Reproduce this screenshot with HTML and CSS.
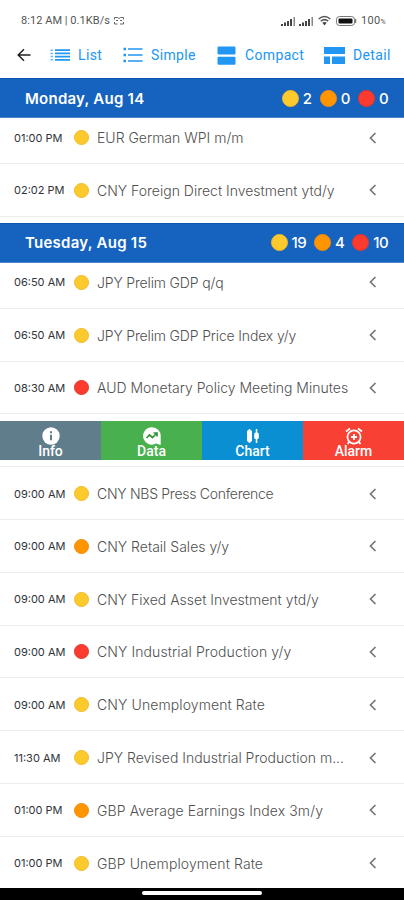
FILE: index.html
```html
<!DOCTYPE html>
<html lang="en">
<head>
    <meta charset="UTF-8">
    <meta name="viewport" content="width=device-width, initial-scale=1.0">
    <title>Economic Calendar</title>
    <link rel="stylesheet" href="styles.css">
</head>
<body>
  <svg width="0" height="0" class="defs">
    <symbol id="chevron" viewBox="0 0 8 12"><path d="M6.500 1L1.500 6l5 5" fill="none" stroke="currentColor" stroke-width="1.700"/></symbol>
    <symbol id="signal" viewBox="0 0 15 10"><path d="M0 8h2v2H0zM3 6.500h2V10H3zM6 5h2v5H6zM9 3h2v7H9z" fill="#444"/><path d="M12.500 1h1.500v9h-1.500z" fill="#888"/></symbol>
  </svg>
  <div class="screen">
    <div class="status">
      <span class="status-text">8:12 AM | 0.1KB/s</span>
      <svg class="mail" width="10" height="8" viewBox="0 0 10 8"><path d="M.5 2.500v-2h3l1.500 1 1.500-1h3v2M.5 5v2h3M6 7h3.500V5M2 3.500h2M6 3.500h2" fill="none" stroke="#666"/></svg>
      <svg class="signal" width="15" height="10"><use href="#signal"/></svg>
      <svg class="signal" width="15" height="10"><use href="#signal"/></svg>
      <svg class="wifi" width="13" height="11" viewBox="0 0 13 11"><path d="M.7 4Q6.500-1 12.300 4M2.800 6.200q3.700-3 7.400 0" fill="none" stroke="#555" stroke-width="1.600"/><path d="M4.300 7.800q2.200-1.600 4.400 0L6.500 10.500z" fill="#444"/></svg>
      <svg class="battery" width="21" height="10" viewBox="0 0 21 10"><rect x=".5" y=".5" width="18" height="9" rx="3" fill="none" stroke="#777"/><rect x="2.500" y="2.500" width="14" height="5" rx="1" fill="#111"/><path d="M19.500 3v4" stroke="#777" stroke-width="1.500"/></svg>
      <span class="percent">100<small>%</small></span>
    </div>

    <div class="tabs">
      <svg class="back" width="14" height="14" viewBox="0 0 14 14"><path d="M13.500 7H1.500M7 1.200L1.200 7 7 12.800" fill="none" stroke="#222" stroke-width="1.500"/></svg>
      <div class="tab tab-list">
        <svg width="20" height="12" viewBox="0 0 20 12"><path d="M5 1.200h15M5 4.400h15M5 7.600h15M5 10.800h15" stroke="#2196f3" stroke-width="1.700"/><path d="M.5 1.200h2.500M.5 4.400h2.500M.5 7.600h2.500M.5 10.800h2.500" stroke="#6bb8f6" stroke-width="1.500"/></svg>
        <span>List</span>
      </div>
      <div class="tab tab-simple">
        <svg width="20" height="16" viewBox="0 0 20 16"><path d="M5 2h14.500M5 8h14.500M5 14h14.500" stroke="#2196f3" stroke-width="1.700"/><path d="M.5 2h2.500M.5 8h2.500M.5 14h2.500" stroke="#2196f3" stroke-width="2.300"/></svg>
        <span>Simple</span>
      </div>
      <div class="tab tab-compact">
        <svg width="19" height="19" viewBox="0 0 19 19"><rect x=".5" y=".5" width="18" height="8" rx="1.200" fill="#2196f3"/><rect x=".5" y="10.700" width="18" height="8" rx="1.200" fill="#2196f3"/></svg>
        <span>Compact</span>
      </div>
      <div class="tab tab-detail">
        <svg width="21" height="17" viewBox="0 0 21 17"><path d="M0 0h21v7H0zM0 9.500h6V17H0zM8 9.500h13V17H8z" fill="#2196f3"/></svg>
        <span>Detail</span>
      </div>
    </div>

    <div class="day">
      <h2>Monday, Aug 14</h2>
      <div class="counts">
        <i class="dot yellow"></i><span>2</span>
        <i class="dot orange"></i><span>0</span>
        <i class="dot red"></i><span>0</span>
      </div>
    </div>
    <div class="event first"><time>01:00 PM</time><i class="dot yellow"></i><p>EUR German WPI m/m</p><svg class="chevron"><use href="#chevron"/></svg></div>
    <div class="event"><time>02:02 PM</time><i class="dot yellow"></i><p>CNY Foreign Direct Investment ytd/y</p><svg class="chevron"><use href="#chevron"/></svg></div>

    <div class="day next-day">
      <h2>Tuesday, Aug 15</h2>
      <div class="counts">
        <i class="dot yellow"></i><span>19</span>
        <i class="dot orange"></i><span>4</span>
        <i class="dot red"></i><span>10</span>
      </div>
    </div>
    <div class="event first"><time>06:50 AM</time><i class="dot yellow"></i><p class="tight">JPY Prelim GDP q/q</p><svg class="chevron"><use href="#chevron"/></svg></div>
    <div class="event"><time>06:50 AM</time><i class="dot yellow"></i><p class="tight">JPY Prelim GDP Price Index y/y</p><svg class="chevron"><use href="#chevron"/></svg></div>
    <div class="event"><time>08:30 AM</time><i class="dot red"></i><p>AUD Monetary Policy Meeting Minutes</p><svg class="chevron"><use href="#chevron"/></svg></div>

    <div class="actions">
      <div class="action info">
        <svg width="18" height="18" viewBox="0 0 18 18"><circle cx="9" cy="9" r="8.700" fill="#fff"/><path d="M9 4.300v2M9 7.700v5.600" stroke="#607d8b" stroke-width="2"/></svg>
        <span>Info</span>
      </div>
      <div class="action data">
        <svg width="18" height="18" viewBox="0 0 18 18"><path d="M9 .3a8.700 8.700 0 1 0 4 16.300L17.700 18V9A8.700 8.700 0 0 0 9 .3z" fill="#fff"/><path d="M3.500 11l3-3 3 2.500 4-4M10.500 6H14v3.500" fill="none" stroke="#35923b" stroke-width="1.700"/></svg>
        <span>Data</span>
      </div>
      <div class="action chart">
        <svg width="18" height="18" viewBox="0 0 18 18"><rect x="3" y="3" width="5" height="12" rx="1.700" fill="#fff"/><path d="M5.500 2v14M12.500 2v14" stroke="#fff" stroke-width="1.500"/><rect x="10.200" y="5.500" width="4.600" height="6.500" rx="1.500" fill="#fff"/></svg>
        <span>Chart</span>
      </div>
      <div class="action alarm">
        <svg width="18" height="18" viewBox="0 0 18 18"><circle cx="9" cy="10" r="6.600" fill="none" stroke="#fff" stroke-width="1.700"/><path d="M1 4.500l4-3M17 4.500l-4-3M9 7v6M6 10h6M4.500 14.500l-2 2.500M13.500 14.500l2 2.500" stroke="#fff" stroke-width="1.800"/></svg>
        <span>Alarm</span>
      </div>
    </div>

    <div class="event"><time>09:00 AM</time><i class="dot yellow"></i><p class="tighter">CNY NBS Press Conference</p><svg class="chevron"><use href="#chevron"/></svg></div>
    <div class="event"><time>09:00 AM</time><i class="dot orange"></i><p>CNY Retail Sales y/y</p><svg class="chevron"><use href="#chevron"/></svg></div>
    <div class="event"><time>09:00 AM</time><i class="dot yellow"></i><p>CNY Fixed Asset Investment ytd/y</p><svg class="chevron"><use href="#chevron"/></svg></div>
    <div class="event"><time>09:00 AM</time><i class="dot red"></i><p class="wide">CNY Industrial Production y/y</p><svg class="chevron"><use href="#chevron"/></svg></div>
    <div class="event"><time>09:00 AM</time><i class="dot yellow"></i><p class="wide">CNY Unemployment Rate</p><svg class="chevron"><use href="#chevron"/></svg></div>
    <div class="event"><time>11:30 AM</time><i class="dot yellow"></i><p>JPY Revised Industrial Production m...</p><svg class="chevron"><use href="#chevron"/></svg></div>
    <div class="event"><time>01:00 PM</time><i class="dot orange"></i><p class="wide">GBP Average Earnings Index 3m/y</p><svg class="chevron"><use href="#chevron"/></svg></div>
    <div class="event last"><time>01:00 PM</time><i class="dot yellow"></i><p class="wide">GBP Unemployment Rate</p><svg class="chevron"><use href="#chevron"/></svg></div>

    <div class="gesture-bar"><span></span></div>
  </div>
</body>
</html>
```
FILE: styles.css
```css
* {
    box-sizing: border-box;
}

body {
    margin: 0;
    background-color: #ffffff;
    font-family: Inter, "Liberation Sans", sans-serif;
}

.defs {
    position: absolute;
}

.screen {
    width: 404px;
    height: 900px;
    display: flex;
    flex-direction: column;
    overflow: hidden;
}

.screen > div {
    flex-shrink: 0;
}

.status {
    height: 34px;
    padding: 7px 20px 0 21px;
    display: flex;
    align-items: center;
    font-family: Roboto, sans-serif;
    font-size: 11px;
    color: #555555;
    white-space: nowrap;
}

.status-text {
    width: 93px;
    letter-spacing: 0.05px;
}

.mail {
    margin-right: auto;
}

.signal {
    margin-right: 3px;
}

.wifi {
    margin: 0 5px 0 1px;
}

.battery {
    margin-right: 4px;
}

.percent {
    width: 23px;
    letter-spacing: 0.3px;
}

.percent small {
    font-size: 7px;
}

.tabs {
    height: 44px;
    padding: 0 0 2px 17px;
    display: flex;
    align-items: center;
    font-family: Roboto, sans-serif;
    font-size: 14px;
    font-weight: 400;
    color: #2196f3;
}

.tab {
    display: flex;
    align-items: center;
    letter-spacing: 0.35px;
}

.tab-list {
    width: 73px;
    margin-left: 19px;
    gap: 8px;
}

.tab-simple {
    width: 94px;
    gap: 8px;
}

.tab-compact {
    width: 107px;
    gap: 9px;
}

.tab-detail {
    gap: 8px;
}

.day {
    height: 40px;
    padding: 0 16px 0 25px;
    display: flex;
    align-items: center;
    justify-content: space-between;
    background-color: #1663bf;
    border-top: 1px solid #0c54ae;
    border-bottom: 1px solid #4c87cc;
    color: #ffffff;
}

.next-day {
    margin-top: 6px;
}

.day h2 {
    margin: 0;
    font-size: 15px;
    font-weight: 600;
    letter-spacing: 0.25px;
}

.counts {
    display: flex;
    align-items: center;
    font-size: 15px;
    font-weight: 500;
    letter-spacing: -0.6px;
}

.counts span {
    min-width: 9px;
    margin-left: 4px;
}

.counts span + .dot {
    margin-left: 8px;
}

.dot {
    width: 15px;
    height: 15px;
    border-radius: 50%;
    flex-shrink: 0;
}

.day .dot {
    width: 17px;
    height: 17px;
}

.yellow {
    background-color: #fdca2e;
    border: 1px solid #f3b926;
}

.orange {
    background-color: #ff9500;
    border: 1px solid #f58c0a;
}

.red {
    background-color: #fb3b2f;
    border: 1px solid #ea3428;
}

.event {
    height: 52.8px;
    padding: 1px 26px 0 14px;
    display: flex;
    align-items: center;
    border-bottom: 1px solid #ececec;
    background-color: #ffffff;
}

.event.first {
    height: 46px;
    padding-top: 0;
    padding-bottom: 6px;
}

.event.last {
    height: 51.2px;
    padding-top: 2px;
    border-bottom: none;
}

.event time {
    width: 60px;
    font-size: 11px;
    font-weight: 400;
    color: #30343a;
    white-space: nowrap;
}

.event p {
    flex: 1;
    margin: 0 0 0 8px;
    font-size: 14px;
    font-weight: 300;
    color: #505050;
    white-space: nowrap;
}

.event .tight {
    letter-spacing: -0.16px;
}

.event .tighter {
    letter-spacing: -0.28px;
}

.event .wide {
    letter-spacing: 0.1px;
}

.chevron {
    width: 8px;
    height: 12px;
    color: #777777;
    margin-right: 1px;
}

.actions {
    height: 52.8px;
    padding: 7px 0 6px;
    display: flex;
    border-bottom: 1px solid #ececec;
}

.action {
    flex: 1;
    display: flex;
    flex-direction: column;
    align-items: center;
    padding-top: 6px;
    color: #ffffff;
    font-family: Roboto, sans-serif;
    font-size: 14px;
    font-weight: 500;
    line-height: 13px;
}

.info {
    background-color: #607d8b;
}

.data {
    background-color: #48b04c;
}

.chart {
    background-color: #0a8fd3;
}

.alarm {
    background-color: #f94035;
}

.gesture-bar {
    height: 12px;
    margin-top: auto;
    padding-bottom: 2px;
    display: flex;
    align-items: center;
    justify-content: center;
    background-color: #000000;
}

.gesture-bar span {
    width: 120px;
    height: 4px;
    border-radius: 2px;
    background-color: #ffffff;
}
```
